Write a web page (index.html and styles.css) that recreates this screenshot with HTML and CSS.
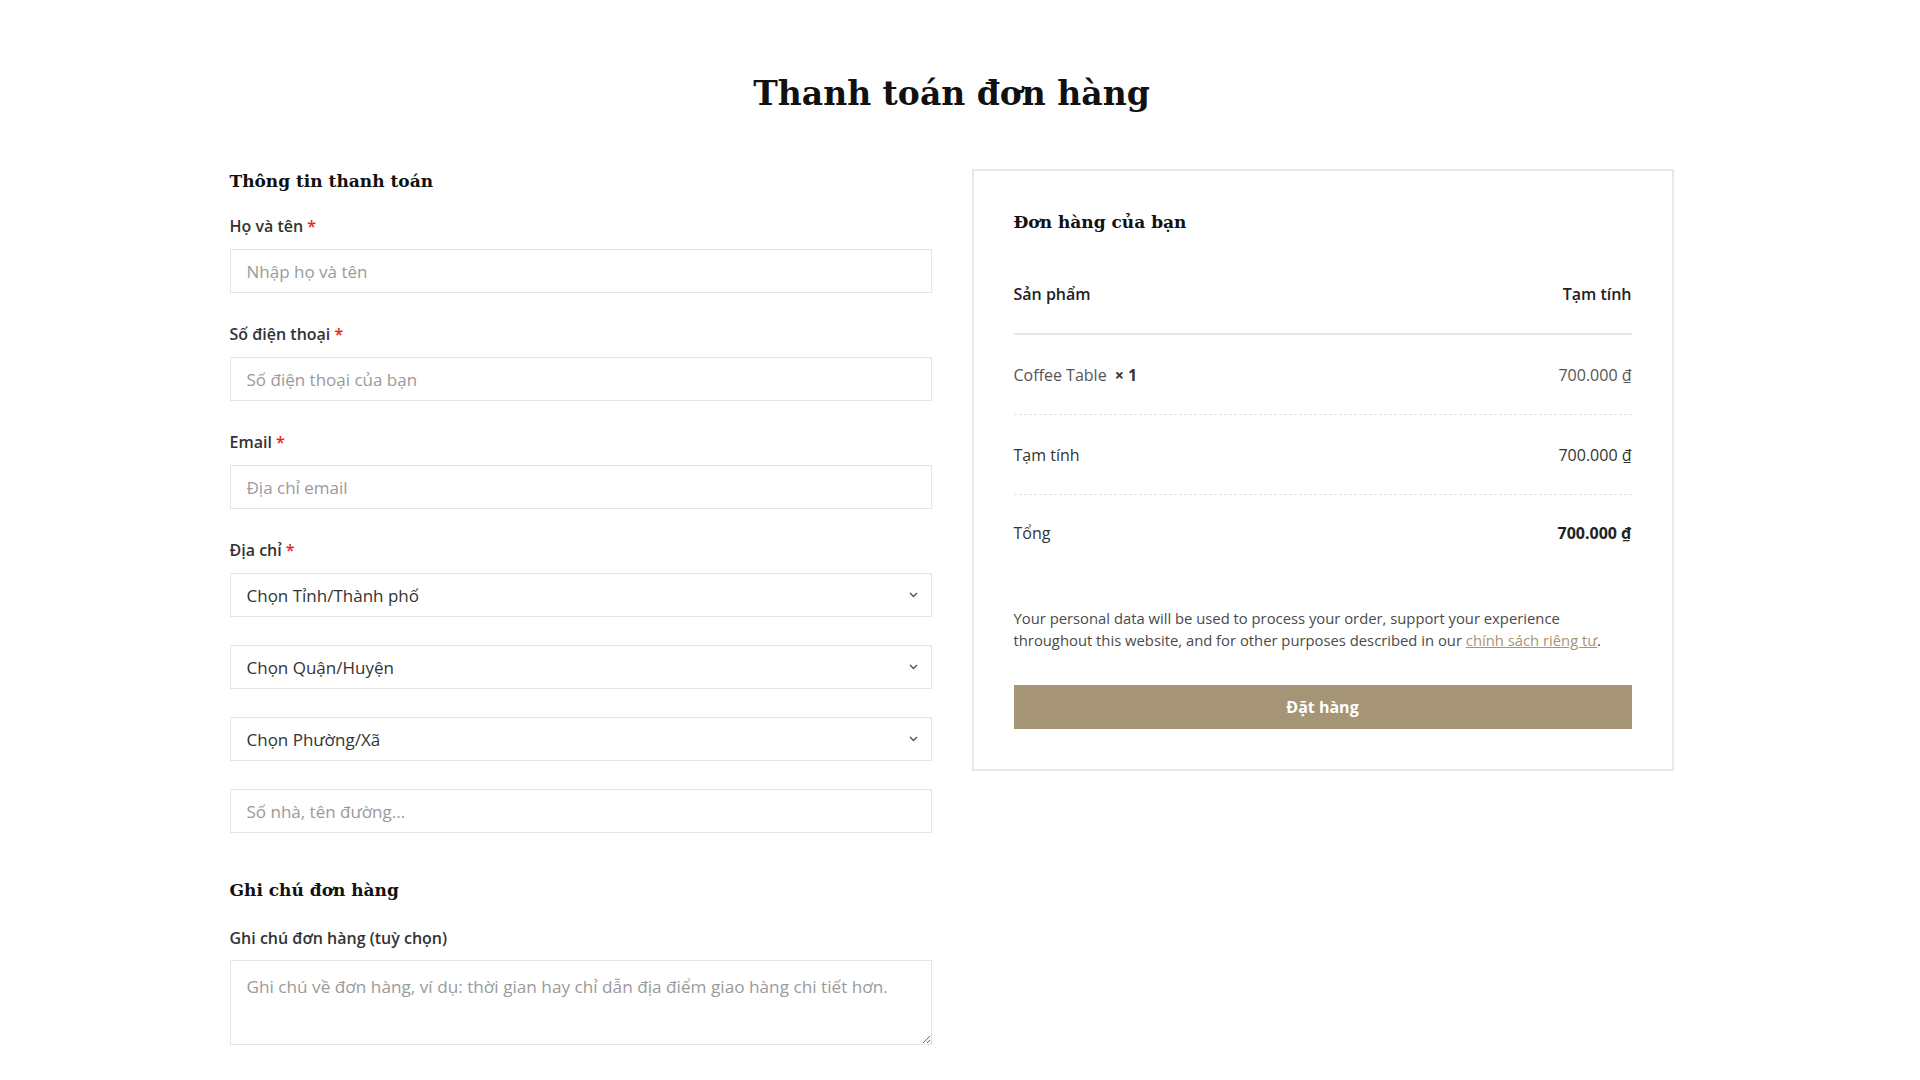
FILE: index.html
```html
<!DOCTYPE html>
<html lang="vi">
<head>
<meta charset="utf-8">
<title>Thanh toán đơn hàng</title>
<link rel="stylesheet" href="styles.css">
</head>
<body>
<div class="page">
  <h1 class="page-title">Thanh toán đơn hàng</h1>
  <div class="checkout">
    <section class="billing">
      <h2 class="section-title">Thông tin thanh toán</h2>
      <div class="field">
        <label class="label">Họ và tên <span class="req">*</span></label>
        <input class="input" type="text" placeholder="Nhập họ và tên">
      </div>
      <div class="field">
        <label class="label">Số điện thoại <span class="req">*</span></label>
        <input class="input" type="text" placeholder="Số điện thoại của bạn">
      </div>
      <div class="field">
        <label class="label">Email <span class="req">*</span></label>
        <input class="input" type="text" placeholder="Địa chỉ email">
      </div>
      <div class="field address">
        <label class="label">Địa chỉ <span class="req">*</span></label>
        <div class="select"><span>Chọn Tỉnh/Thành phố</span><svg class="chev" width="9" height="6" viewBox="0 0 9 6"><path d="M1 1l3.5 3.5L8 1" fill="none" stroke="#555" stroke-width="1.4"/></svg></div>
        <div class="select"><span>Chọn Quận/Huyện</span><svg class="chev" width="9" height="6" viewBox="0 0 9 6"><path d="M1 1l3.5 3.5L8 1" fill="none" stroke="#555" stroke-width="1.4"/></svg></div>
        <div class="select"><span>Chọn Phường/Xã</span><svg class="chev" width="9" height="6" viewBox="0 0 9 6"><path d="M1 1l3.5 3.5L8 1" fill="none" stroke="#555" stroke-width="1.4"/></svg></div>
        <input class="input" type="text" placeholder="Số nhà, tên đường...">
      </div>
      <h2 class="section-title notes-title">Ghi chú đơn hàng</h2>
      <label class="label notes-label">Ghi chú đơn hàng (tuỳ chọn)</label>
      <textarea class="textarea" placeholder="Ghi chú về đơn hàng, ví dụ: thời gian hay chỉ dẫn địa điểm giao hàng chi tiết hơn."></textarea>
    </section>
    <aside class="order">
      <h2 class="order-title">Đơn hàng của bạn</h2>
      <div class="row row-head"><span>Sản phẩm</span><span>Tạm tính</span></div>
      <div class="row row-item"><span class="muted">Coffee Table <b class="qty">× 1</b></span><span class="muted">700.000 ₫</span></div>
      <div class="row row-item"><span class="dark">Tạm tính</span><span class="dark">700.000 ₫</span></div>
      <div class="row row-total"><span class="dark">Tổng</span><span class="total">700.000 ₫</span></div>
      <p class="privacy">Your personal data will be used to process your order, support your experience throughout this website, and for other purposes described in our <a href="#" class="link">chính sách riêng tư</a>.</p>
      <button class="btn">Đặt hàng</button>
    </aside>
  </div>
</div>
</body>
</html>
```
FILE: styles.css
```css
* { box-sizing: border-box; }
html, body { margin: 0; padding: 0; background: #fff; }
body {
  font-family: "Open Sans", "Noto Sans", sans-serif;
  font-size: 16px;
  color: #333;
  padding-right: 17px;
}
.page {
  width: 1444px;
  margin: 0 auto;
  padding-top: 73px;
}
.page-title {
  margin: 0;
  text-align: center;
  font-family: "DejaVu Serif", serif;
  font-weight: 700;
  font-size: 33px;
  line-height: 42px;
  color: #111;
}
.checkout {
  display: grid;
  grid-template-columns: 1fr 1fr;
  gap: 40px;
  margin-top: 54px;
  align-items: start;
}
.section-title {
  margin: 0 0 22px;
  font-family: "DejaVu Serif", serif;
  font-weight: 700;
  font-size: 17px;
  line-height: 24px;
  color: #111;
}
.field { display: flex; flex-direction: column; margin-bottom: 30px; }
.field.address { gap: 28px; margin-bottom: 45px; }
.field.address .label { margin-bottom: -16px; }
.label {
  display: block;
  font-weight: 600;
  font-size: 16px;
  line-height: 22px;
  color: #333;
  margin-bottom: 12px;
}
.req { color: #e2241b; }
.input, .select, .textarea {
  width: 100%;
  height: 44px;
  border: 1px solid #e4e4e9;
  border-radius: 0;
  padding: 0 16px;
  font-family: inherit;
  font-size: 17px;
  color: #333;
  background: #fff;
  outline: none;
}
.input::placeholder, .textarea::placeholder { color: #9a9a9a; }
.select {
  display: flex;
  align-items: center;
  justify-content: space-between;
  padding-right: 13px;
}
.chev { display: block; }
.notes-title { margin-bottom: 25px; }
.notes-label { margin-bottom: 11px; }
.textarea {
  display: block;
  height: 85px;
  padding: 14px 16px;
  font-size: 17.2px;
  line-height: 24px;
  resize: vertical;
}
.order {
  border: 2px solid #e8e8e8;
  padding: 40px;
}
.order-title {
  margin: 0 0 21px;
  font-family: "DejaVu Serif", serif;
  font-weight: 700;
  font-size: 17px;
  line-height: 22px;
  color: #111;
}
.row {
  display: flex;
  justify-content: space-between;
  padding: 29px 0 28px;
  line-height: 22px;
  font-size: 16px;
}
.row-head {
  font-weight: 600;
  color: #222;
  border-bottom: 2px solid #e6e6e6;
}
.row-item { border-bottom: 1px dashed #e2e2e2; }
.row-total { padding-top: 27px; }
.muted { color: #555; }
.dark { color: #333; }
.qty { font-weight: 700; color: #333; margin-left: 4px; }
.total { font-weight: 700; color: #222; }
.privacy {
  margin: 35px 0 34px;
  font-size: 14.8px;
  line-height: 22px;
  color: #4a4a4a;
}
.link { color: #a69477; text-decoration: underline; }
.btn {
  display: block;
  width: 100%;
  height: 44px;
  border: 0;
  background: #a69477;
  color: #fff;
  font-family: inherit;
  font-weight: 700;
  font-size: 16px;
  cursor: pointer;
}
```
